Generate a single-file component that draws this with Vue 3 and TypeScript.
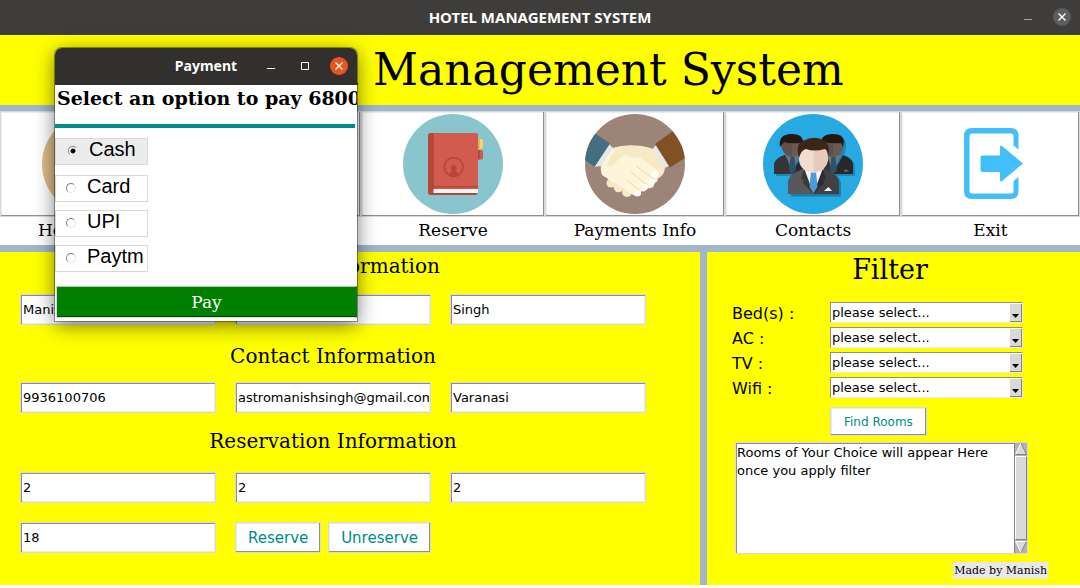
<script setup lang="ts">
import { ref } from 'vue'

interface Field {
  label: string
  value: string
}
interface Section {
  key: string
  title: string
  fields: Field[]
}

const sections = ref<Section[]>([
  {
    key: 'personal',
    title: 'Personal Information',
    fields: [
      { label: 'First name', value: 'Manish' },
      { label: 'Middle name', value: '' },
      { label: 'Last name', value: 'Singh' },
    ],
  },
  {
    key: 'contact',
    title: 'Contact Information',
    fields: [
      { label: 'Phone', value: '9936100706' },
      { label: 'Email', value: 'astromanishsingh@gmail.com' },
      { label: 'City', value: 'Varanasi' },
    ],
  },
  {
    key: 'reservation',
    title: 'Reservation Information',
    fields: [
      { label: 'Adults', value: '2' },
      { label: 'Children', value: '2' },
      { label: 'Days', value: '2' },
      { label: 'Room number', value: '18' },
    ],
  },
])

const filters = ref([
  { id: 'beds', label: 'Bed(s) :', value: '', options: ['1', '2', '3'] },
  { id: 'ac', label: 'AC :', value: '', options: ['Yes', 'No'] },
  { id: 'tv', label: 'TV :', value: '', options: ['Yes', 'No'] },
  { id: 'wifi', label: 'Wifi :', value: '', options: ['Yes', 'No'] },
])

const nav = [
  { id: 'status', label: 'Hotel Status' },
  { id: 'rooms', label: 'Rooms' },
  { id: 'reserve', label: 'Reserve' },
  { id: 'payments', label: 'Payments Info' },
  { id: 'contacts', label: 'Contacts' },
  { id: 'exit', label: 'Exit' },
]

const results = ref('Rooms of Your Choice will appear Here\nonce you apply filter')
const methods = ['Cash', 'Card', 'UPI', 'Paytm']
const method = ref('Cash')
const amount = 6800
</script>

<template>
  <div class="window">
    <header class="titlebar">
      <span class="titlebar-text">HOTEL MANAGEMENT SYSTEM</span>
      <div class="controls">
        <button class="ctl" aria-label="Minimize">
          <svg width="18" height="18" viewBox="0 0 18 18"><path d="M5 11.5h8" stroke="#a5a4a2" /></svg>
        </button>
        <button class="ctl" aria-label="Close">
          <svg width="18" height="18" viewBox="0 0 18 18">
            <circle cx="9" cy="9" r="9" fill="#5d5d5d" />
            <path d="M5.5 5.5l7 7M12.5 5.5l-7 7" stroke="#fff" stroke-width="1.4" />
          </svg>
        </button>
      </div>
    </header>

    <h1 class="banner">Hotel Management System</h1>

    <nav class="nav">
      <div v-for="n in nav" :key="n.id" class="nav-item">
        <button class="nav-btn" :aria-labelledby="'nav-' + n.id">
          <svg v-if="n.id === 'status'" viewBox="0 0 100 100" class="icon">
            <circle cx="50" cy="50" r="50" fill="#debb85" />
          </svg>
          <svg v-else-if="n.id === 'rooms'" viewBox="0 0 100 100" class="icon">
            <circle cx="50" cy="50" r="50" fill="#84c5a0" />
          </svg>
          <svg v-else-if="n.id === 'reserve'" viewBox="0 0 100 100" class="icon">
            <circle cx="50" cy="50" r="50" fill="#88c5cd" />
            <rect x="72" y="25" width="8" height="10" rx="1.5" fill="#fdd165" />
            <rect x="72" y="36" width="8" height="9.5" rx="1.5" fill="#d1594d" />
            <path d="M75 25h1.6v10H75z" fill="#dfae50" />
            <path d="M75 36h1.6v9.5H75z" fill="#b04438" />
            <rect x="25" y="19" width="50" height="62" rx="3" fill="#b54738" />
            <path d="M31 19h42a2 2 0 0 1 2 2v51H31z" fill="#d15b4e" />
            <path d="M31 73.6h44v1.4H31z" fill="#d15b4e" />
            <path d="M30.5 75H75v4H30.5z" fill="#f5f5f5" />
            <circle cx="50.7" cy="53" r="9.3" fill="none" stroke="#b54738" stroke-width="1.7" />
            <path d="M50.7 51a3 3 0 0 1 2 5.2q.3 2.600 2.800 3.800v2q-4.800 2-9.600 0v-2q2.500-1.200 2.800-3.800a3 3 0 0 1 2-5.200z" fill="#b54738" />
          </svg>
          <svg v-else-if="n.id === 'payments'" viewBox="0 0 100 100" class="icon">
            <defs><clipPath id="disc"><circle cx="50" cy="50" r="50" /></clipPath></defs>
            <g clip-path="url(#disc)">
              <rect width="100" height="100" fill="#9c8578" />
              <path d="M27 34Q39 30.500 50 31.500Q60 31.500 68 35L80 53Q80 60 74 64L52 76L20 60Z" fill="#f6eac6" />
              <g fill="#f6eac6">
                <circle cx="26" cy="69" r="4.500" /><circle cx="33.500" cy="73.500" r="4.800" /><circle cx="42" cy="78" r="5" />
              </g>
              <path d="M25 36Q35 32 42 41Q48 45 54 43L72 56Q76 60 72 63.500Q74 68 69 69Q70 75 62.500 74Q60 79 56 77Q57 84 50 82L17 61Q14 52 18 47Z" fill="#fdf4da" />
              <path d="M22 52Q24 43 31 36Q36 31 46 33L40 41Q34 44 29 51Q24 54 22 52Z" fill="#f6eac6" />
              <path d="M51 52L69 65M46 58L62 71M42 66L55 77" stroke="#f0e2ba" stroke-width="1.100" fill="none" />
              <g fill="#fff">
                <circle cx="69.500" cy="60" r="3.200" /><circle cx="67" cy="68" r="3" /><circle cx="60" cy="73" r="3" /><circle cx="53" cy="79" r="3" />
              </g>
              <path d="M24 30L28 34L16 52L9 53Z" fill="#e6e7e8" />
              <path d="M71 31L67.500 35L79.500 54L84 52Z" fill="#e6e7e8" />
              <path d="M8 18L25 29.500L9.500 53L-4 43Z" fill="#446e82" />
              <path d="M88 17L70 30L85 53.500L103 42Z" fill="#805125" />
            </g>
          </svg>
          <svg v-else-if="n.id === 'contacts'" viewBox="0 0 100 100" class="icon">
            <defs>
              <g id="guest">
                <path d="M0 61V52Q1 45 11 42L28 42Q38 45 38 52V61Z" fill="#1f86b5" transform="translate(2 2)" />
                <path d="M8 28Q9 22 20 22Q29 22 30 28Q31 43 20 44Z" fill="#1f86b5" transform="translate(1 2)" />
                <path d="M0 61V52Q1 45 11 42L19 58L28 42Q38 45 38 52V61Z" fill="#29282a" />
                <path d="M0 61V52Q1 45 11 42L19 58V61Z" fill="#353436" />
                <path d="M12 41L18 61L25 41Z" fill="#76777b" />
                <path d="M16.500 44h4l1.500 13-3.500 4-3.500-4z" fill="#2f526b" />
                <path d="M7 28Q7 23 18 23Q28 23 28 28Q29 43 18 44Q7 43 7 28Z" fill="#5d504d" />
                <path d="M18 23Q28 23 28 28Q29 43 18 44Z" fill="#6b5a54" />
                <path d="M6 34Q4 22 16 21Q28 20 29 28L28 34L26 30Q16 31 10 29Z" fill="#231812" />
              </g>
            </defs>
            <circle cx="50" cy="50" r="50" fill="#27a9e1" />
            <use href="#guest" x="11" y="-1" />
            <use href="#guest" x="52" y="-1" />
            <path d="M80 57.500l3-2 3 2z" fill="#777" />
            <path d="M27 82.500h51V69Q77 61 65 57L40 57Z" fill="#1c7eac" />
            <path d="M25 80V68Q26 60 40 55H62Q75 60 76 68V80Z" fill="#414042" />
            <path d="M25 80V68Q26 60 40 55L50.500 74V80Z" fill="#58585c" />
            <path d="M40 55L50.500 79L61 55Z" fill="#f2f3f5" />
            <path d="M41 54L50.500 80L40 69L41 66L38 65Z" fill="#39393c" />
            <path d="M60 54L50.500 80L61 69L60 66L63 65Z" fill="#2d2d30" />
            <path d="M48 58h5l1.500 15-4 6-4-6z" fill="#4b9cd8" />
            <path d="M36 35Q37 28 50 28Q65 28 65 36V46Q63 57 50.500 59Q37 57 36 46Z" fill="#f3ddd0" />
            <path d="M50.500 28Q65 28 65 36V46Q63 57 50.500 59Z" fill="#e8cbbc" />
            <path d="M36 44Q32 30 40 27Q51 21 60 26Q68 29 65 44Q65 37 62 35Q51 38 43 35Q38 36 36 44Z" fill="#3c2717" />
            <path d="M61 77L65.500 73L69 77Z" fill="#fff" />
          </svg>
          <svg v-else viewBox="0 0 100 100" class="icon">
            <path d="M77.500 35.500V22q0-8-8-8H31q-8 0-8 8v55q0 8 8 8h38.500q8 0 8-8V63l-5 4v10q0 2.500-2.500 2.500H31q-2.500 0-2.500-2.500V22q0-2.500 2.500-2.500h39q2.500 0 2.500 2.500v9.500z" fill="#42bffb" />
            <path d="M41.500 41.500H59V33q0-2 2-1L82 49.500 61 67q-2 1.500-2-1v-8H41.500q-2 0-2-2V43.500q0-2 2-2z" fill="#42bffb" />
          </svg>
        </button>
        <span :id="'nav-' + n.id" class="nav-label">{{ n.label }}</span>
      </div>
    </nav>

    <main class="body">
      <form class="form" @submit.prevent>
        <section v-for="s in sections" :key="s.key" :class="['section', s.key]">
          <h2>{{ s.title }}</h2>
          <div class="fields">
            <input v-for="f in s.fields" :key="f.label" v-model="f.value" class="field" type="text" :aria-label="f.label" />
            <div v-if="s.key === 'reservation'" class="actions">
              <button type="button" class="btn">Reserve</button>
              <button type="button" class="btn">Unreserve</button>
            </div>
          </div>
        </section>
      </form>

      <aside class="filter">
        <h2 class="filter-title">Filter</h2>
        <div class="filter-grid">
          <template v-for="f in filters" :key="f.id">
            <label :for="f.id">{{ f.label }}</label>
            <div class="combo">
              <select :id="f.id" v-model="f.value">
                <option value="">please select...</option>
                <option v-for="o in f.options" :key="o">{{ o }}</option>
              </select>
              <span class="combo-arrow">
                <svg width="7" height="4" viewBox="0 0 7 4"><path d="M0 0h7L3.500 4z" /></svg>
              </span>
            </div>
          </template>
          <button type="button" class="btn find">Find Rooms</button>
        </div>
        <div class="results">
          <textarea v-model="results" aria-label="Matching rooms"></textarea>
          <div class="scroll">
            <svg width="12" height="12" viewBox="0 0 12 12"><path d="M6 0l5.500 11.500H.5z" fill="#d9d9d9" /><path d="M6 0L.5 11.500" stroke="#fff" /><path d="M6 0l5.500 11.500H.5" stroke="#828282" fill="none" /></svg>
            <div class="thumb"></div>
            <svg width="12" height="12" viewBox="0 0 12 12"><path d="M6 11.500L.5.5h11z" fill="#d9d9d9" /><path d="M6 11.500L.5.5h11" stroke="#fff" fill="none" /><path d="M6 11.500L11.500.5" stroke="#828282" /></svg>
          </div>
        </div>
        <span class="credit">Made by Manish</span>
      </aside>
    </main>

    <div class="dialog" role="dialog" aria-labelledby="pay-title">
      <header class="dialog-bar">
        <span id="pay-title" class="dialog-title">Payment</span>
        <div class="dialog-controls">
          <button class="ctl" aria-label="Minimize payment">
            <svg width="18" height="18" viewBox="0 0 18 18"><path d="M5 11.500h8" stroke="#fff" /></svg>
          </button>
          <button class="ctl" aria-label="Maximize payment">
            <svg width="18" height="18" viewBox="0 0 18 18"><path d="M5.500 5.500h7v7h-7z" stroke="#fff" fill="none" /></svg>
          </button>
          <button class="ctl" aria-label="Close payment">
            <svg width="18" height="18" viewBox="0 0 18 18">
              <circle cx="9" cy="9" r="9" fill="#e95420" />
              <path d="M5.500 5.500l7 7M12.500 5.500l-7 7" stroke="#fff" stroke-width="1.200" />
            </svg>
          </button>
        </div>
      </header>
      <p class="prompt">Select an option to pay {{ amount }}</p>
      <div class="rule"></div>
      <div class="methods">
        <label v-for="m in methods" :key="m" :class="['method', { active: m === method }]">
          <input v-model="method" type="radio" name="method" :value="m" />
          <span>{{ m }}</span>
        </label>
      </div>
      <button class="pay">Pay</button>
    </div>
  </div>
</template>

<style>
body {
  margin: 0;
  background: #fff;
}
</style>

<style scoped>
* {
  box-sizing: border-box;
}
.window {
  position: relative;
  font-family: "DejaVu Sans", sans-serif;
  color: #000;
}
button,
input,
select,
textarea {
  font-family: inherit;
  color: inherit;
  margin: 0;
  border-radius: 0;
}
.titlebar {
  display: grid;
  grid-template-columns: 1fr auto 1fr;
  align-items: center;
  height: 35px;
  padding: 0 9px 2px;
  background: #3e3d3b;
  color: #fff;
}
.titlebar-text {
  grid-column: 2;
  font: 700 15px/20px "Noto Sans", sans-serif;
}
.controls {
  display: flex;
  justify-content: flex-end;
  gap: 16px;
}
.ctl {
  display: block;
  width: 18px;
  height: 18px;
  padding: 0;
  border: 0;
  background: none;
}
.ctl svg {
  display: block;
}
.banner {
  margin: 0;
  height: 70px;
  background: #ff0;
  font: 400 44px/70px "DejaVu Serif", serif;
  text-align: center;
}
.nav {
  display: grid;
  grid-template-columns: 184fr 177fr 184fr 180fr 176fr 179fr;
  border-top: 6px solid #a2b5cd;
  border-bottom: 7px solid #a2b5cd;
  background: #fff;
}
.nav-item {
  display: flex;
  flex-direction: column;
}
.nav-btn {
  display: flex;
  justify-content: center;
  height: 106px;
  padding: 2px 0 0;
  border: 1px solid #d9d9d9;
  background: #fff;
  box-shadow: inset -1px -1px #8f8f8f, inset 1px 1px #ececec;
}
.icon {
  width: 100px;
  height: 100px;
}
.nav-label {
  height: 28px;
  font: 17px/26px "DejaVu Serif", serif;
  text-align: center;
}
.body {
  display: grid;
  grid-template-columns: 700fr 380fr;
  background: #ff0;
}
.form {
  padding: 0 54px 32px 20px;
}
h2 {
  margin: 0;
  font: 400 20px/28px "DejaVu Serif", serif;
  text-align: center;
}
.fields {
  display: grid;
  grid-template-columns: repeat(3, minmax(0, 1fr));
  gap: 19px;
}
.personal h2 {
  margin-bottom: 14px;
}
.contact h2 {
  margin: 17px 0 12px;
}
.reservation h2 {
  margin: 14px 0 17px;
}
.field {
  width: 100%;
  height: 31px;
  padding: 0 1px 1px 2px;
  border: 1px solid #d9d9d9;
  background: #fff;
  box-shadow: inset 1px 1px #8f8f8f, inset -1px -1px #ececec;
  font-size: 13px;
}
.actions {
  display: flex;
  justify-content: space-between;
}
.btn {
  height: 31px;
  padding: 0 12px;
  border: 1px solid #d9d9d9;
  background: #fff;
  box-shadow: inset -1px -1px #8f8f8f, inset 1px 1px #ececec;
  color: #008b8b;
  font-size: 15px;
}
.filter {
  display: flex;
  flex-direction: column;
  border-left: 7px solid #a2b5cd;
  padding: 0 32px 5px 25px;
}
.filter-title {
  font-size: 27px;
  line-height: 36px;
}
.filter-grid {
  display: grid;
  grid-template-columns: 98fr 193fr;
  grid-auto-rows: 21px;
  gap: 4px 0;
  margin: 14px 25px 0 0;
}
.filter-grid label {
  font-size: 16px;
  line-height: 23px;
}
.combo {
  position: relative;
}
.combo select {
  display: block;
  width: 100%;
  height: 21px;
  padding: 0 16px 1px 1px;
  border: 1px solid;
  border-color: #8f8f8f #ececec #ececec #8f8f8f;
  background: #fff;
  appearance: none;
  font-size: 13px;
}
.combo-arrow {
  position: absolute;
  top: 2px;
  right: 1px;
  bottom: 1px;
  display: flex;
  align-items: flex-end;
  justify-content: center;
  width: 12px;
  padding-bottom: 3px;
  border-right: 1px solid #828282;
  border-bottom: 1px solid #828282;
  background: #d9d9d9;
  pointer-events: none;
}
.find {
  grid-column: 2;
  justify-self: start;
  height: 29px;
  margin-top: 5px;
  padding: 0 13px;
  font-size: 12px;
}
.results {
  display: flex;
  height: 112px;
  margin: 19px 20px 8px 3px;
  border: 1px solid #d9d9d9;
  background: #fff;
  box-shadow: inset 1px 1px #8f8f8f;
}
textarea {
  flex: 1;
  min-width: 0;
  margin: 1px 0 0 1px;
  padding: 0;
  border: 0;
  resize: none;
  overflow: hidden;
  background: transparent;
  font-size: 13px;
  line-height: 18px;
}
.scroll {
  display: flex;
  flex-direction: column;
  gap: 1px;
  width: 13px;
  border-left: 1px solid #828282;
  background: #b3b3b3;
}
.scroll svg {
  display: block;
}
.thumb {
  flex: 1;
  border: 1px solid;
  border-color: #fff #828282 #828282 #fff;
  background: #d9d9d9;
}
.credit {
  align-self: flex-end;
  padding: 0 1px;
  background: #e8e8e8;
  font: 11px/17px "DejaVu Serif", serif;
}
.dialog {
  position: absolute;
  top: 48px;
  left: 55px;
  width: 302px;
  padding-bottom: 3px;
  overflow: hidden;
  border-radius: 7px 7px 0 0;
  background: #fff;
  box-shadow: 0 0 0 1px rgba(0, 0, 0, 0.35), 0 4px 20px rgba(0, 0, 0, 0.55);
}
.dialog-bar {
  display: grid;
  grid-template-columns: 1fr auto 1fr;
  align-items: center;
  height: 37px;
  padding: 0 9px 1px;
  background: #322f2f;
  color: #fff;
}
.dialog-title {
  grid-column: 2;
  font: 700 14px/20px "Noto Sans", sans-serif;
}
.dialog-controls {
  display: flex;
  justify-content: flex-end;
  gap: 16px;
}
.prompt {
  margin: 0;
  padding-left: 2px;
  font: 700 19px/27px "DejaVu Serif", serif;
  white-space: nowrap;
}
.rule {
  height: 4px;
  margin: 12px 2px 10px 0;
  background: #008b8b;
}
.methods {
  display: flex;
  flex-direction: column;
  align-items: flex-start;
  gap: 8px;
}
.method {
  display: flex;
  align-items: center;
  width: 93px;
  height: 27px;
  padding: 0 0 2px 10px;
  border: 1px solid #d9d9d9;
  font: 20px/22px "Liberation Sans", sans-serif;
}
.method span {
  padding-bottom: 3px;
}
.method.active {
  margin-bottom: 2px;
  padding-left: 12px;
  background: #ececec;
}
.method input {
  width: 10px;
  height: 10px;
  margin: 0 11px 0 0;
  border: 1px solid;
  border-color: #828282 #e4e4e4 #e4e4e4 #828282;
  border-radius: 50%;
  background: #fff;
  appearance: none;
}
.method input:checked {
  background: radial-gradient(circle, #000 0 2px, #fff 3px);
}
.pay {
  display: block;
  width: calc(100% - 1px);
  height: 32px;
  margin: 14px 0 0 1px;
  padding: 0;
  border: 1px solid;
  border-color: #b5c9b5 #008000 #d9d9d9 #d9d9d9;
  background: #008000;
  box-shadow: inset 0 -1px #004a00;
  color: #fff;
  font: 17px/20px "DejaVu Serif", serif;
}
</style>
